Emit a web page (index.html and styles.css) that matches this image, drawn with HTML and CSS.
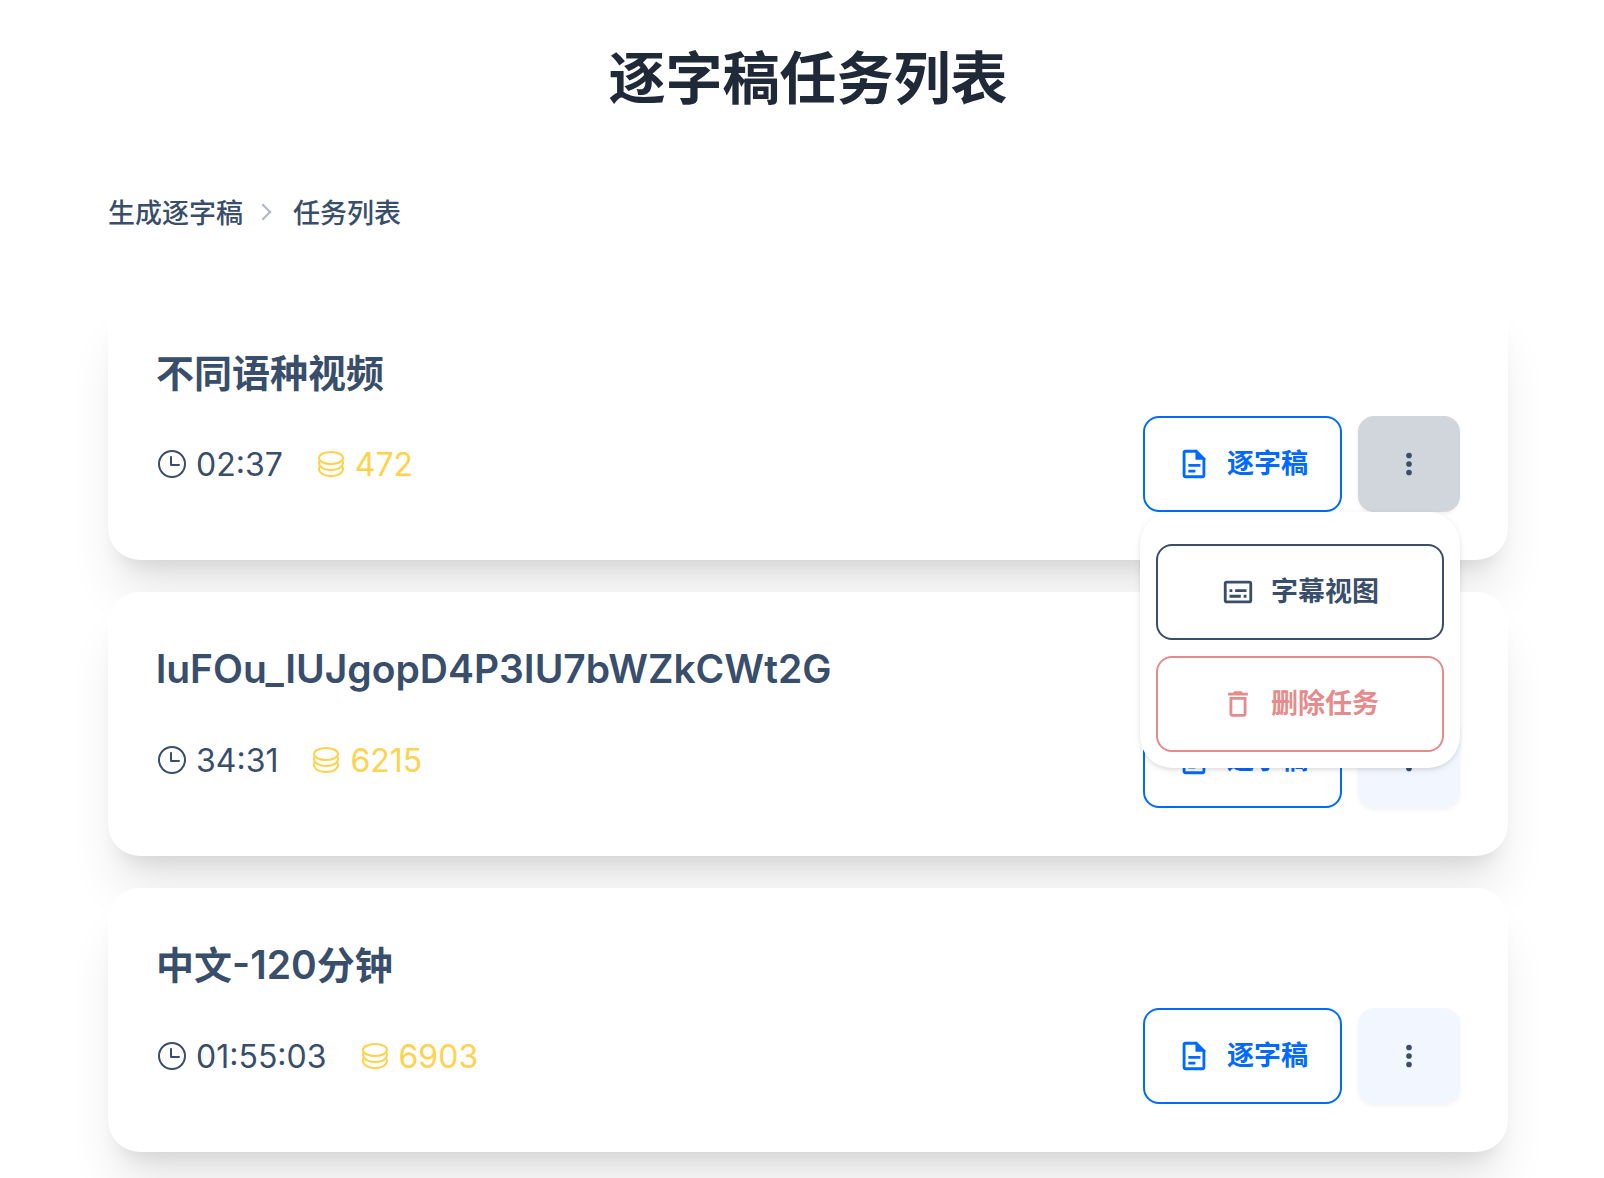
FILE: index.html
```
<!DOCTYPE html>
<html lang="zh-CN">
<head>
    <meta charset="UTF-8">
    <meta name="viewport" content="width=device-width, initial-scale=1.0">
    <title>逐字稿任务列表</title>
    <link rel="stylesheet" href="styles.css">
</head>
<body>
    <!-- shared icons -->
    <svg class="sprite" aria-hidden="true">
        <symbol id="icon-clock" viewBox="0 0 32 32">
            <circle cx="16" cy="16" r="13" fill="none" stroke="currentColor" stroke-width="2"/>
            <path d="M15 9v8h8" fill="none" stroke="currentColor" stroke-width="2" stroke-linecap="round" stroke-linejoin="round"/>
        </symbol>
        <symbol id="icon-coins" viewBox="0 0 32 32">
            <g fill="none" stroke="currentColor" stroke-width="2">
                <ellipse cx="16" cy="10" rx="12" ry="6"/>
                <path d="M5 12c-3 4 1 10 11 10s14-6 11-10"/>
                <path d="M5 18c-3 4 1 10 11 10s14-6 11-10"/>
            </g>
        </symbol>
        <symbol id="icon-file" viewBox="0 0 24 24">
            <path d="M14 3H6a1 1 0 0 0-1 1v16a1 1 0 0 0 1 1h12a1 1 0 0 0 1-1V8M8 13h8.5M8 17h5" fill="none" stroke="currentColor" stroke-width="2"/>
            <path d="M13 2h1l6 6v1h-7z" fill="currentColor"/>
        </symbol>
        <symbol id="icon-subtitle" viewBox="0 0 24 24">
            <rect x="3" y="5" width="18" height="14" rx="1" fill="none" stroke="currentColor" stroke-width="2"/>
            <path d="M6 11h2M10 11h8M6 15h8M16 15h2" stroke="currentColor" stroke-width="2"/>
        </symbol>
        <symbol id="icon-trash" viewBox="0 0 24 24">
            <path d="M6 19c0 1.1.9 2 2 2h8c1.1 0 2-.9 2-2V7H6v12zM8 9h8v10H8V9zm7.5-5l-1-1h-5l-1 1H5v2h14V4h-3.5z" fill="currentColor"/>
        </symbol>
        <symbol id="icon-dots" viewBox="0 0 24 24">
            <g fill="currentColor">
                <circle cx="12" cy="6" r="2"/>
                <circle cx="12" cy="12" r="2"/>
                <circle cx="12" cy="18" r="2"/>
            </g>
        </symbol>
    </svg>

    <main class="page">
        <h1 class="page-title">逐字稿任务列表</h1>

        <nav class="breadcrumbs" aria-label="breadcrumb">
            <a href="#">生成逐字稿</a>
            <span class="chevron"></span>
            <a href="#">任务列表</a>
        </nav>

        <div class="task-list">
            <section class="card">
                <h2 class="card-title">不同语种视频</h2>
                <div class="card-row">
                    <div class="meta">
                        <span class="meta-item"><svg class="meta-icon"><use href="#icon-clock"/></svg><span class="meta-text">02:37</span></span>
                        <span class="meta-item coins"><svg class="meta-icon"><use href="#icon-coins"/></svg><span class="meta-text">472</span></span>
                    </div>
                    <div class="actions">
                        <button type="button" class="btn btn-primary"><svg class="icon"><use href="#icon-file"/></svg>逐字稿</button>
                        <div class="dropdown">
                            <button type="button" class="btn btn-more active" aria-label="更多" aria-expanded="true"><svg class="icon"><use href="#icon-dots"/></svg></button>
                            <div class="menu">
                                <button type="button" class="btn btn-neutral"><svg class="icon"><use href="#icon-subtitle"/></svg>字幕视图</button>
                                <button type="button" class="btn btn-error"><svg class="icon"><use href="#icon-trash"/></svg>删除任务</button>
                            </div>
                        </div>
                    </div>
                </div>
            </section>

            <section class="card">
                <h2 class="card-title"><span class="latin">luFOu_IUJgopD4P3IU7bWZkCWt2G</span></h2>
                <div class="card-row">
                    <div class="meta">
                        <span class="meta-item"><svg class="meta-icon"><use href="#icon-clock"/></svg><span class="meta-text">34:31</span></span>
                        <span class="meta-item coins"><svg class="meta-icon"><use href="#icon-coins"/></svg><span class="meta-text">6215</span></span>
                    </div>
                    <div class="actions">
                        <button type="button" class="btn btn-primary"><svg class="icon"><use href="#icon-file"/></svg>逐字稿</button>
                        <button type="button" class="btn btn-more" aria-label="更多"><svg class="icon"><use href="#icon-dots"/></svg></button>
                    </div>
                </div>
            </section>

            <section class="card">
                <h2 class="card-title">中文<span class="latin">-120</span>分钟</h2>
                <div class="card-row">
                    <div class="meta">
                        <span class="meta-item"><svg class="meta-icon"><use href="#icon-clock"/></svg><span class="meta-text">01:55:03</span></span>
                        <span class="meta-item coins"><svg class="meta-icon"><use href="#icon-coins"/></svg><span class="meta-text">6903</span></span>
                    </div>
                    <div class="actions">
                        <button type="button" class="btn btn-primary"><svg class="icon"><use href="#icon-file"/></svg>逐字稿</button>
                        <button type="button" class="btn btn-more" aria-label="更多"><svg class="icon"><use href="#icon-dots"/></svg></button>
                    </div>
                </div>
            </section>
        </div>
    </main>
</body>
</html>
```
FILE: styles.css
```
* {
    box-sizing: border-box;
}

body {
    margin: 0;
    background-color: #fff;
    color: #394e6a;
    font-family: Inter, "Noto Sans CJK SC", sans-serif;
}

.sprite {
    display: none;
}

.page {
    padding: 40px 96px 32px 108px;
}

.page-title {
    margin: 0;
    color: #1f2937;
    font-size: 57px;
    font-weight: 700;
    line-height: 78px;
    text-align: center;
}

.breadcrumbs {
    display: flex;
    align-items: center;
    margin: 72px 0 62px;
    font-size: 27px;
    font-weight: 500;
    line-height: 40px;
}

.breadcrumbs a {
    padding-top: 4px;
    color: inherit;
    text-decoration: none;
}

.chevron {
    width: 12px;
    height: 12px;
    margin: 0 24px 0 14px;
    border-top: 2px solid #b0b8c3;
    border-right: 2px solid #b0b8c3;
    transform: rotate(45deg);
}

.task-list {
    display: flex;
    flex-direction: column;
    gap: 32px;
}

.card {
    padding: 48px;
    border-radius: 32px;
    background-color: #fff;
    box-shadow: 0 40px 50px -10px rgba(0, 0, 0, 0.1), 0 16px 20px -12px rgba(0, 0, 0, 0.1);
}

.card-title {
    margin: 0 0 14px;
    font-size: 38px;
    font-weight: 600;
    line-height: 58px;
}

.latin {
    font-size: 39px;
}

.card-row,
.actions,
.meta,
.meta-item {
    display: flex;
    align-items: center;
}

.card-row {
    justify-content: space-between;
}

.meta {
    gap: 32px;
    font-size: 32px;
    line-height: 48px;
}

.meta-item {
    gap: 8px;
}

.meta-icon {
    width: 32px;
    height: 32px;
}

.meta-text {
    padding-top: 2px;
}

.coins {
    color: #ffd24d;
}

.actions {
    gap: 16px;
}

.btn {
    display: flex;
    align-items: center;
    justify-content: center;
    gap: 16px;
    height: 96px;
    padding: 0 32px;
    border: 2px solid currentColor;
    border-radius: 16px;
    background-color: #fff;
    font-family: inherit;
    font-size: 27px;
    font-weight: 600;
    line-height: 32px;
    cursor: pointer;
}

.icon {
    width: 34px;
    height: 34px;
}

.btn-primary {
    color: #0069ff;
}

.btn-neutral {
    color: #394e6a;
}

.btn-error {
    color: #e58b8b;
}

.btn-more {
    border-color: transparent;
    background-color: #f2f7ff;
    color: #394e6a;
    box-shadow: 0 2px 4px rgba(0, 0, 0, 0.05);
}

.btn-more.active {
    border-color: #d1d5dc;
    background-color: #d1d5dc;
}

.dropdown {
    position: relative;
}

.menu {
    position: absolute;
    top: 100%;
    right: 0;
    z-index: 10;
    display: flex;
    flex-direction: column;
    gap: 16px;
    width: 320px;
    padding: 32px 16px 16px;
    border-radius: 32px;
    background-color: #fff;
    box-shadow: 0 2px 6px rgba(0, 0, 0, 0.1), 0 2px 4px -2px rgba(0, 0, 0, 0.1);
}
```
